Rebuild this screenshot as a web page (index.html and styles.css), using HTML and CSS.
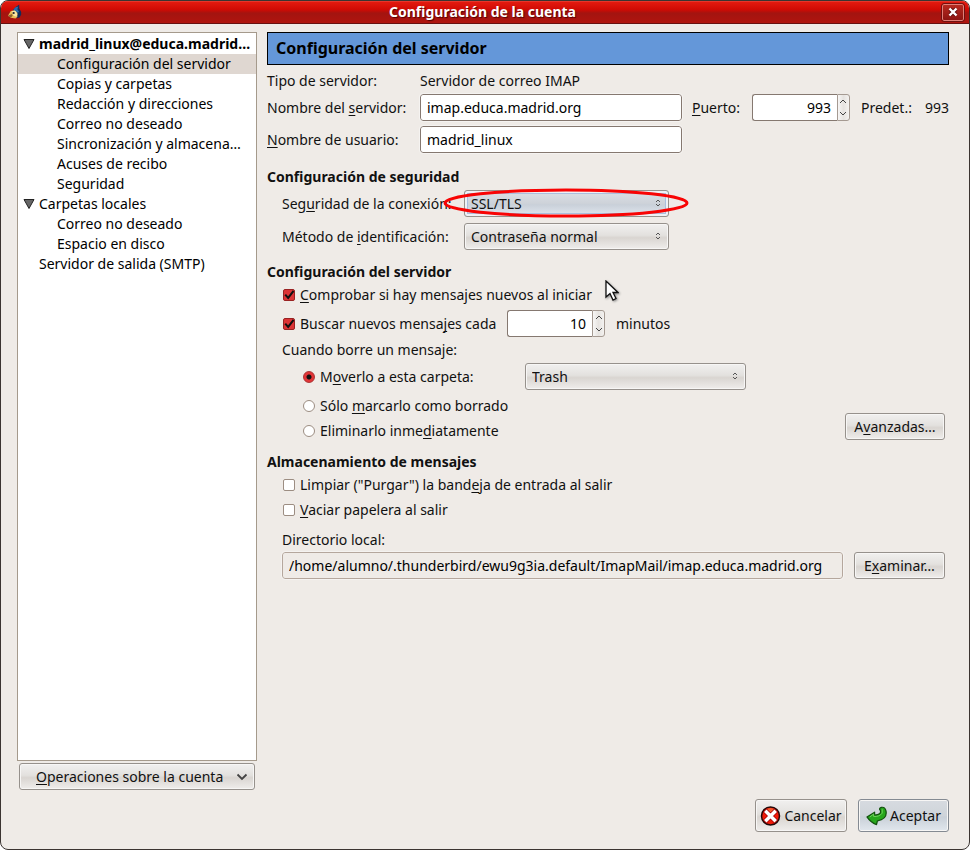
FILE: index.html
```html
<!DOCTYPE html>
<html lang="es">
<head>
<meta charset="utf-8">
<title>Configuración de la cuenta</title>
<link rel="stylesheet" href="styles.css">
</head>
<body>
<div class="window">
  <header class="titlebar">
    <svg class="app-icon" viewBox="0 0 16 16" aria-hidden="true">
      <path d="M5 6 L8 3 L12 0 L12 4 L14 8 L14 11 L12 14 L9 14 Z" fill="#102c5c"/>
      <path d="M6 5 L8 3 L11 2 L10 5 L12 8 L9 9 L6 7Z" fill="#2c6ba8"/>
      <path d="M0 12 L3 7 L7 6 L10 9 L10 13 L8 15 L3 14Z" fill="#e9bd55"/>
      <path d="M4 7 L8 7 L10 10 L9 13 L6 12Z" fill="#fae6a5"/>
      <path d="M0 12 L4 10 L5 12 L3 14Z" fill="#8d6133"/>
      <path d="M5 8h2v2H5z" fill="#333"/>
    </svg>
    <h1 class="title">Configuración de la cuenta</h1>
    <button class="close" type="button" aria-label="Cerrar">
      <svg viewBox="0 0 10 10"><path d="M2 2 8 8M8 2 2 8" stroke="#601010" stroke-width="4"/><path d="M1.500 1.500 8.500 8.500M8.500 1.500 1.500 8.500" stroke="#fff" stroke-width="2.400"/></svg>
    </button>
  </header>
  <div class="content">
    <aside class="sidebar">
      <ul class="tree">
        <li class="node account"><svg class="twisty" viewBox="0 0 12 10"><path d="M1 .5H11L6 9.500Z" fill="#666" stroke="#222"/></svg>madrid_linux@educa.madrid…</li>
        <li class="leaf selected">Configuración del servidor</li>
        <li class="leaf">Copias y carpetas</li>
        <li class="leaf">Redacción y direcciones</li>
        <li class="leaf">Correo no deseado</li>
        <li class="leaf">Sincronización y almacena…</li>
        <li class="leaf">Acuses de recibo</li>
        <li class="leaf">Seguridad</li>
        <li class="node"><svg class="twisty" viewBox="0 0 12 10"><path d="M1 .5H11L6 9.500Z" fill="#666" stroke="#222"/></svg>Carpetas locales</li>
        <li class="leaf">Correo no deseado</li>
        <li class="leaf">Espacio en disco</li>
        <li class="node plain">Servidor de salida (SMTP)</li>
      </ul>
      <button class="button operations" type="button"><span><u>O</u>peraciones sobre la cuenta</span>
        <svg class="chevron" viewBox="0 0 12 8"><path d="M1.500 1.500 6 6 10.500 1.500" fill="none" stroke="#444" stroke-width="1.800"/></svg>
      </button>
    </aside>
    <main class="panel">
      <h2 class="banner">Configuración del servidor</h2>
      <div class="server-form">
        <span>Tipo de servidor:</span><span class="type">Servidor de correo IMAP</span>
        <label for="host">Nombre del <u>s</u>ervidor:</label>
        <input class="field" id="host" type="text" value="imap.educa.madrid.org">
        <div class="port">
          <label class="port-label" for="port"><u>P</u>uerto:</label>
          <span class="spin"><input id="port" type="text" inputmode="numeric" value="993"><span class="steps"><button type="button" aria-label="Subir"><svg viewBox="0 0 8 5"><path d="M1 4 4 1 7 4"/></svg></button><button type="button" aria-label="Bajar"><svg viewBox="0 0 8 5"><path d="M1 1 4 4 7 1"/></svg></button></span></span>
          <span class="default-label">Predet.:</span><span>993</span>
        </div>
        <label for="user"><u>N</u>ombre de usuario:</label>
        <input class="field" id="user" type="text" value="madrid_linux">
      </div>

      <h3 class="heading security-heading">Configuración de seguridad</h3>
      <div class="security-form">
        <label for="connection">Seg<u>u</u>ridad de la conexión:</label>
        <span class="choice focused"><select id="connection"><option>SSL/TLS</option></select>
          <svg class="arrows" viewBox="0 0 6 8"><path d="M1 3 3 1 5 3M1 5 3 7 5 5"/></svg>
          <svg class="highlight" viewBox="0 0 246 30"><ellipse cx="123" cy="15" rx="121" ry="13" fill="none" stroke="#f80404" stroke-width="3"/></svg>
        </span>
        <label for="method">Método de <u>i</u>dentificación:</label>
        <span class="choice"><select id="method"><option>Contraseña normal</option></select>
          <svg class="arrows" viewBox="0 0 6 8"><path d="M1 3 3 1 5 3M1 5 3 7 5 5"/></svg></span>
      </div>

      <h3 class="heading">Configuración del servidor</h3>
      <div class="group">
        <div class="check-row"><input id="startup" type="checkbox" checked><label for="startup"><u>C</u>omprobar si hay mensajes nuevos al iniciar</label>
          <svg class="pointer" viewBox="0 0 14 21"><path d="M1 1V17L5 13.500 8 20 11 18.500 8 12.500H13Z" fill="#fff" stroke="#111" stroke-width="1.300"/></svg>
        </div>
        <div class="check-row interval"><input id="every" type="checkbox" checked><label class="interval-label" for="every">Buscar nuevos mensa<u>j</u>es cada</label>
          <span class="spin"><input type="text" inputmode="numeric" value="10" aria-label="Minutos"><span class="steps"><button type="button" aria-label="Subir"><svg viewBox="0 0 8 5"><path d="M1 4 4 1 7 4"/></svg></button><button type="button" aria-label="Bajar"><svg viewBox="0 0 8 5"><path d="M1 1 4 4 7 1"/></svg></button></span></span>
          <span class="unit">minutos</span>
        </div>
        <p class="text-row">Cuando borre un mensaje:</p>
        <div class="check-row folder-row"><input id="move" name="delete" type="radio" checked><label class="folder-label" for="move">M<u>o</u>verlo a esta carpeta:</label>
          <span class="choice folder"><select aria-label="Carpeta"><option>Trash</option></select>
            <svg class="arrows" viewBox="0 0 6 8"><path d="M1 3 3 1 5 3M1 5 3 7 5 5"/></svg></span>
        </div>
        <div class="delete-options">
          <div class="radios">
            <div class="check-row tall"><input id="mark" name="delete" type="radio"><label for="mark">Sólo <u>m</u>arcarlo como borrado</label></div>
            <div class="check-row tall"><input id="remove" name="delete" type="radio"><label for="remove">Eliminarlo inme<u>d</u>iatamente</label></div>
          </div>
          <button class="button advanced" type="button"><span>A<u>v</u>anzadas…</span></button>
        </div>
      </div>

      <h3 class="heading storage-heading">Almacenamiento de mensajes</h3>
      <div class="group storage">
        <div class="check-row tall"><input id="purge" type="checkbox"><label for="purge">Limpiar ("Purgar") la band<u>e</u>ja de entrada al salir</label></div>
        <div class="check-row tall"><input id="empty" type="checkbox"><label for="empty"><u>V</u>aciar papelera al salir</label></div>
        <label class="text-row directory-label" for="directory">Directorio local:</label>
        <div class="directory-row">
          <input class="field readonly" id="directory" type="text" readonly value="/home/alumno/.thunderbird/ewu9g3ia.default/ImapMail/imap.educa.madrid.org">
          <button class="button browse" type="button"><span>E<u>x</u>aminar…</span></button>
        </div>
      </div>
    </main>
  </div>
  <footer class="actions">
    <button class="button action" type="button">
      <svg viewBox="0 0 20 20"><circle cx="10" cy="10" r="9" fill="#f01a08" stroke="#220808" stroke-width="1.500"/><path d="M4 5Q10 -1 16 5Q10 7 4 5" fill="#f47b43" opacity=".7"/><path d="M6 6 14 14M14 6 6 14" stroke="#a00" stroke-width="5" stroke-linecap="square"/><path d="M6 6 14 14M14 6 6 14" stroke="#fff" stroke-width="3.500" stroke-linecap="square"/></svg>
      <span>Cancelar</span></button>
    <button class="button action accept" type="button">
      <svg viewBox="0 0 22 20"><path d="M1 11 9 6 9 9C14 9 16 7 15 4Q13 2 16 1Q20 0 21 5C22 11 18 14 12 15L11 19Q5 17 1 11Z" fill="#27a71c" stroke="#14520f" stroke-width="1.300" stroke-linejoin="round"/><path d="M4 11 8 8V10.500Q14 11 17 7V3" fill="none" stroke="#71d45e"/></svg>
      <span>Aceptar</span></button>
  </footer>
</div>
</body>
</html>
```
FILE: styles.css
```css
* { box-sizing: border-box; }
body { margin: 0; background: #fff; color: #111; font: 14px/20px "Noto Sans", "Open Sans", sans-serif; }
h1, h2, h3, p, ul { margin: 0; padding: 0; font-size: 14px; }
button, input, select { margin: 0; font: inherit; color: inherit; }
button { padding: 0; }
svg { display: block; flex: none; }
u { text-decoration-thickness: 1px; text-underline-offset: 2px; text-decoration-skip-ink: none; }
label, span, button, li { white-space: nowrap; }

.window { display: flex; flex-direction: column; min-height: 100vh; border: 1px solid #3b3431; border-radius: 8px; background: #efebe7; overflow: hidden; }
.titlebar { display: flex; align-items: center; height: 23px; padding: 0 5px 0 7px; background: linear-gradient(#e51c10 0, #cf0a04 40%, #a31410 55%, #b0140e 100%); border-bottom: 1px solid #611; box-shadow: inset 0 1px #e8352a; }
.app-icon { width: 15px; height: 16px; }
.title { flex: 1; text-align: center; color: #fff; text-shadow: 1px 1px 1px #500; }
.close { display: grid; place-items: center; width: 22px; height: 17px; border: 1px solid #e08078; border-radius: 2px; background: linear-gradient(#b72a20, #8d1411); outline: 1px solid #701010; }
.close svg { width: 10px; height: 10px; }

.content { display: flex; flex: 1; gap: 10px; padding: 8px 20px 0 16px; }
.sidebar { display: flex; flex-direction: column; gap: 2px; width: 240px; flex: none; }
.tree { flex: 1; padding-top: 1px; border: 1px solid #a59a8c; background: #fff; color: #000; list-style: none; overflow: hidden; }
.node { display: flex; align-items: center; gap: 4px; height: 20px; padding-left: 5px; }
.plain { padding-left: 21px; }
.account { font-weight: 700; }
.leaf { height: 20px; padding-left: 39px; }
.selected { background: #dfd7d1; }
.twisty { width: 12px; height: 10px; }

.button { display: flex; align-items: center; justify-content: center; height: 27px; border: 1px solid #96918c; border-radius: 3px; background: linear-gradient(#f1f0ef 0, #e3e1de 45%, #d9d5d1 55%, #efedeb 100%); box-shadow: inset 0 0 0 1px #f7f6f5; }
.operations { margin: 0 2px; padding: 0 6px 0 16px; justify-content: space-between; }
.chevron { width: 12px; height: 8px; }

.panel { flex: 1; min-width: 0; }
.banner { height: 33px; padding: 0 8px; border: 1px solid #000; background: #6497d9; color: #000; font-size: 16px; line-height: 31px; }
.server-form { display: grid; grid-template-columns: 143px minmax(100px, 1fr) auto; grid-template-rows: 17px 27px 27px; align-items: center; gap: 5px 10px; margin-top: 7px; }
.type { grid-column: 2 / 4; }
.field { width: 100%; min-width: 0; height: 27px; padding: 0 6px; border: 1px solid #857870; border-radius: 3px; background: #fff; color: #000; outline: 1px solid #f5f3f1; }
.port { display: flex; align-items: center; }
.port-label { width: 60px; }
.spin { display: flex; width: 98px; height: 27px; }
.spin input { width: 85px; padding: 0 6px; border: 1px solid #857870; border-right: 0; border-radius: 3px 0 0 3px; background: #fff; color: #000; text-align: right; }
.steps { display: flex; flex-direction: column; width: 13px; border: 1px solid #a59a92; border-radius: 0 3px 3px 0; background: linear-gradient(90deg, #f7f6f5, #e6e3e0 50%, #f4f2f0); }
.steps button { display: grid; flex: 1; place-items: center; border: 0; background: none; }
.steps svg { width: 8px; height: 5px; fill: none; stroke: #444; }
.default-label { width: 75px; padding-left: 11px; }

.heading { margin-top: 12px; margin-bottom: 3px; }
.security-heading { margin-top: 14px; }
.security-form { display: grid; grid-template-columns: 182px 205px; align-items: center; row-gap: 6px; padding-left: 15px; }
.choice { position: relative; display: block; height: 27px; }
.choice select { width: 100%; height: 27px; padding: 0 6px; appearance: none; border: 1px solid #96918c; border-radius: 3px; background: linear-gradient(#f1f0ef 0, #e3e1de 45%, #d9d5d1 55%, #efedeb 100%); box-shadow: inset 0 0 0 1px #f7f6f5; }
.focused select { background: linear-gradient(#dde1e6 0, #cdd2d9 50%, #c9d0d9 55%, #e1e7ef 100%); box-shadow: inset 0 0 0 2px #eef1f5, inset 0 0 0 3px #a9bfdf; }
.arrows { position: absolute; right: 8px; top: 9px; width: 6px; height: 8px; fill: none; stroke: #555; pointer-events: none; }
.highlight { position: absolute; left: -21px; top: -2px; width: 246px; height: 30px; pointer-events: none; }

.group { padding-left: 15px; }
.check-row { position: relative; display: flex; align-items: center; gap: 5px; height: 20px; padding-left: 1px; }
.check-row > input { flex: none; width: 12px; height: 12px; appearance: none; border: 1px solid #9c8d82; background: #fff; }
input[type="checkbox"] { border-radius: 2px; }
input[type="radio"] { border-radius: 50%; }
input[type="checkbox"]:checked { border-color: #922; background: #dc3436 url("data:image/svg+xml,%3Csvg xmlns='http://www.w3.org/2000/svg' viewBox='0 0 12 12'%3E%3Cpath d='M1.500 5.500 5 9.500 11.500 1' fill='none' stroke='%23111' stroke-width='2.400'/%3E%3C/svg%3E"); }
input[type="radio"]:checked { border-color: #a33; background: radial-gradient(circle, #111 0 2px, #e33437 3px); }
.pointer { position: absolute; left: 323px; top: -5px; width: 14px; height: 21px; filter: drop-shadow(1px 1px 1px #888); }
.interval { height: 27px; margin: 5px 0 3px; }
.interval-label { width: 202px; }
.unit { padding-left: 6px; }
.text-row { display: block; height: 20px; }
.folder-row { height: 27px; margin: 3px 0; padding-left: 21px; }
.folder-label { width: 200px; }
.folder { width: 221px; }
.delete-options { display: flex; align-items: flex-end; justify-content: space-between; }
.radios { padding-left: 20px; }
.tall { height: 25px; }
.advanced { width: 100px; margin: 0 4px 3px 0; }
.storage-heading { margin-top: 9px; margin-bottom: 0; }
.directory-label { margin: 8px 0 2px; }
.directory-row { display: flex; gap: 11px; padding-right: 4px; }
.directory-row .field { flex: 1; }
.readonly { border-color: #b5a79d; background: #efebe7; }
.browse { width: 91px; }

.actions { display: flex; justify-content: flex-end; gap: 11px; padding: 9px 20px 17px; }
.action { height: 33px; width: 92px; gap: 3px; }
.action svg { width: 21px; height: 20px; }
.accept { width: 91px; border-color: #848a92; background: linear-gradient(#d7dbe0 0, #cfd4da 50%, #c9d0d8 55%, #e1e7ed 100%); }
```
